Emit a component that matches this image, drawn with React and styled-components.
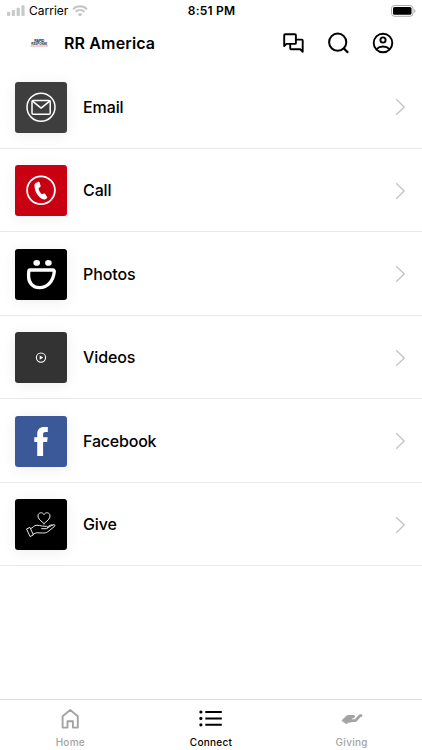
import React from "react";
import styled, { createGlobalStyle } from "styled-components";

const GlobalStyle = createGlobalStyle`
  * { box-sizing: border-box; }
  body { margin: 0; background: #fff; color: #000; font-family: Inter, "Liberation Sans", sans-serif; }
  svg { display: block; flex: none; }
`;

const Screen = styled.div`
  display: flex;
  flex-direction: column;
  height: 750px;
  width: 422px;
  overflow: hidden;
  background: #fff;
`;

const StatusBar = styled.div`
  display: grid;
  grid-template-columns: 1fr auto 1fr;
  align-items: center;
  height: 22px;
  flex: none;
  padding: 0 6px 0 7px;
`;

const StatusGroup = styled.div`
  display: flex;
  align-items: center;
  gap: 4px;
  justify-content: ${(p) => (p.$end ? "flex-end" : "flex-start")};
`;

const Carrier = styled.span`
  font-size: 12px;
  line-height: 22px;
  letter-spacing: 0;
`;

const Clock = styled.span`
  font-size: 12px;
  font-weight: 600;
  letter-spacing: 0.2px;
  line-height: 22px;
`;

const Header = styled.header`
  display: flex;
  align-items: center;
  height: 43px;
  flex: none;
  padding: 0 27px 2px 29px;
`;

const Title = styled.h1`
  margin: 0 auto 0 14px;
  font-size: 16px;
  font-weight: 600;
  line-height: 22px;
  letter-spacing: 0.14px;
`;

const Actions = styled.div`
  display: flex;
  gap: 21px;
`;

const List = styled.main`
  flex: 1;
`;

const Row = styled.div`
  display: flex;
  align-items: center;
  height: 83.5px;
  padding: 2px 16px 0 15px;
  border-bottom: 1px solid #e9e9eb;
`;

const Tile = styled.div`
  width: 52px;
  height: 51px;
  border-radius: 3px;
  background: ${(p) => p.$color};
  box-shadow: 0 2px 14px rgba(0, 0, 0, 0.07);
`;

const Label = styled.span`
  margin: 0 auto 1px 16px;
  font-size: 16px;
  font-weight: 500;
  line-height: 22px;
  letter-spacing: ${(p) => p.$spacing || "-0.1px"};
`;

const TabBar = styled.nav`
  display: grid;
  grid-template-columns: repeat(3, 1fr);
  height: 51px;
  flex: none;
  border-top: 1px solid #dcdcdc;
`;

const Tab = styled.div`
  display: flex;
  flex-direction: column;
  align-items: center;
  padding-top: 7px;
  color: ${(p) => (p.$active ? "#000" : "#a3a3a3")};
`;

const TabLabel = styled.span`
  font-size: 10px;
  font-weight: 500;
  line-height: 14px;
  margin-top: 4px;
  letter-spacing: 0.28px;
`;

const TileArt = ({ children }) => (
  <svg width="52" height="51" viewBox="-0.5 0 52 51" fill="none" stroke="#fff" strokeLinejoin="round" strokeLinecap="round">
    {children}
  </svg>
);

const items = [
  {
    label: "Email", color: "#3e3e3e",
    art: <><circle cx="25.5" cy="25.2" r="14" strokeWidth="1.5" /><rect x="16.5" y="18.4" width="18.2" height="13.8" rx="1.3" strokeWidth="1.5" /><path d="m17 19.2 8.6 6.9 8.6-6.9" strokeWidth="1.5" /></>,
  },
  {
    label: "Call", color: "#c90012",
    art: <><circle cx="25.5" cy="25.3" r="13.9" strokeWidth="1.8" /><path d="m20.3 18 2.6-1.2c.7-.3 1 .1 1.2.7l1 3.2c.2.7 0 1-.5 1.4l-1.5 1.2c.2 2.2 1.5 4.5 3.3 6l1.9-.7c.6-.2 1-.1 1.4.5l1.9 2.8c.3.5.3 1-.2 1.4l-1.6 1c-.9.5-2 .3-3-.2-4.8-2.6-7.8-8-7.8-13.8 0-1.1.4-1.8 1.3-2.3Z" fill="#fff" stroke="none" /></>,
  },
  {
    label: "Photos", color: "#000",
    art: <><ellipse cx="21.2" cy="13.9" rx="3.3" ry="2.8" fill="#fff" stroke="none" /><ellipse cx="32.9" cy="13.9" rx="3.3" ry="2.8" fill="#fff" stroke="none" /><path d="M14.4 21h23c1 0 1.5.7 1.4 1.6C37.9 31.8 32.2 38.6 24 38.6c-6.5 0-10.7-4.5-10.9-10.7-.1-2 0-3.5.2-5.5.1-.9.4-1.4 1.1-1.4Z" strokeWidth="3.3" /></>,
  },
  {
    label: "Videos", color: "#333",
    art: <><circle cx="25.5" cy="25.6" r="4.6" strokeWidth="1.1" /><path d="m24.2 23.4 3.5 2.2-3.5 2.2Z" fill="#fff" stroke="none" /></>,
  },
  {
    label: "Facebook", color: "#3b5998", spacing: "-0.2px",
    art: <path d="M21.7 40V26h-2.9v-4.8h2.9v-3.1c0-4.9 2.6-7.2 7.1-7.2 1.4 0 2.6.1 3.5.2V16h-2.2c-2.1 0-2.5 1-2.5 2.5v2.7h4.6l-.6 4.8h-4v14Z" fill="#fff" stroke="none" />,
  },
  {
    label: "Give", color: "#000",
    art: <g stroke="#e8e8e8" strokeWidth="1"><path d="M28.5 24.6c-2.8-2.5-6-4.6-6-7.6 0-3.7 4.5-4.4 6-1.3 1.5-3.1 6-2.4 6 1.3 0 3-3.2 5.1-6 7.6Z" /><path d="m11.4 29.8 3-1.4 3.5 7.5-3 1.5ZM15.2 29.6c2.5-.7 3.1-3.4 6.2-3.4 2.2 0 3.5.7 5.5.9l4 .2c1.8.1 1.8 2.3 0 2.4h-4.8M31.8 28.9l5.8-3.1c1.8-.7 2.5.7 1.1 1.9l-6.6 5.2c-1.5 1.1-3.2 1.2-5.2 1.1l-5.2-.2c-1.7 0-2.5.8-4.1 1.5M32.4 27.6l2.9-1.6c1-.4 1.7-.2 1.9.2" /></g>,
  },
];

export default function App() {
  return (
    <>
      <GlobalStyle />
      <Screen>
        <StatusBar>
          <StatusGroup>
            <svg width="18" height="12" viewBox="0 0 18 12" fill="#c9c9c9"><rect y="6.7" width="3.2" height="4.3" rx=".8" /><rect x="4.8" y="5" width="3.2" height="6" rx=".8" /><rect x="9.6" y="2.7" width="3.2" height="8.3" rx=".8" /><rect x="14.4" y=".3" width="3.2" height="10.7" rx=".8" /></svg>
            <Carrier>Carrier</Carrier>
            <svg width="16" height="12" viewBox="0 0 16 12" fill="none" stroke="#c5c5c5" strokeWidth="2"><path d="M1 4.2c4-3.9 10-3.9 14 0M3.5 6.9c2.6-2.5 6.4-2.5 9 0" /><path d="M5.6 9.2c1.4-1.3 3.4-1.3 4.8 0L8 11.5Z" fill="#c5c5c5" stroke="none" /></svg>
          </StatusGroup>
          <Clock>8:51 PM</Clock>
          <StatusGroup $end>
            <svg width="25" height="12" viewBox="0 0 25 12"><rect x=".5" y=".5" width="21.5" height="10.8" rx="3" fill="#fff" stroke="#aaa" /><rect x="2" y="2" width="18.5" height="7.8" rx="1.6" /><path d="M23.3 4v4c1.6-.7 1.6-3.3 0-4Z" fill="#aaa" /></svg>
          </StatusGroup>
        </StatusBar>
        <Header>
          <svg width="21" height="10" viewBox="0 0 21 10" fontFamily="Liberation Sans, sans-serif" fontWeight="700" textAnchor="middle">
            <text x="10.3" y="3.8" fontSize="3.6" fill="#222" textLength="10">RAPID</text>
            <text x="10.3" y="6.9" fontSize="3.5" fill="#222" textLength="16" lengthAdjust="spacingAndGlyphs">RESPONSE</text>
            <path d="M1.5 8h17.5" stroke="#df8c91" strokeWidth=".8" />
          </svg>
          <Title>RR America</Title>
          <Actions>
            <svg width="24" height="24" viewBox="0 0 24 24" fill="none" stroke="#000" strokeWidth="1.9" strokeLinejoin="round"><path d="M3.2 15.1V4.2c0-.7.3-1 1-1h9.7c.7 0 1 .3 1 1v7.7c0 .7-.3 1-1 1H5.4ZM14.9 8.6h5.8c.7 0 1 .3 1 1v11.1l-2.5-2.4h-9c-.7 0-1-.3-1-1v-4.4" /></svg>
            <svg width="24" height="24" viewBox="0 0 24 24" fill="none" stroke="#000" strokeWidth="2"><circle cx="11.7" cy="11.2" r="8.6" /><path d="m17.7 17.2 4.4 4.5" strokeWidth="2.3" /></svg>
            <svg width="24" height="24" viewBox="0 0 24 24" fill="none" stroke="#000" strokeWidth="1.9"><circle cx="12" cy="12" r="9.3" /><circle cx="12" cy="9" r="2.6" /><path d="M5.5 18.2c3.5-3.6 9.5-3.6 13 0" /></svg>
          </Actions>
        </Header>
        <List>
          {items.map((item) => (
            <Row key={item.label}>
              <Tile $color={item.color}><TileArt>{item.art}</TileArt></Tile>
              <Label $spacing={item.spacing}>{item.label}</Label>
              <svg width="11" height="18" viewBox="0 0 11 18" fill="none" stroke="#c2c2c4" strokeWidth="1.3"><path d="m1.2 1.2 8 7.8-8 7.8" /></svg>
            </Row>
          ))}
        </List>
        <TabBar>
          <Tab>
            <svg width="24" height="24" viewBox="0 0 24 24" fill="none" stroke="currentColor" strokeWidth="1.9" strokeLinejoin="round"><path d="M4.6 20.6V9.2L12.2 3l7.6 6.2v11.4h-4.9v-6.3H9.5v6.3Z" /></svg>
            <TabLabel>Home</TabLabel>
          </Tab>
          <Tab $active>
            <svg width="24" height="24" viewBox="0 0 24 24" fill="none" stroke="currentColor" strokeWidth="2"><path d="M6.3 5h16.5M6.3 11.4h16.5M6.3 17.8h16.5" /><g fill="currentColor" stroke="none"><circle cx="1.9" cy="5" r="1.6" /><circle cx="1.9" cy="11.4" r="1.6" /><circle cx="1.9" cy="17.8" r="1.6" /></g></svg>
            <TabLabel>Connect</TabLabel>
          </Tab>
          <Tab>
            <svg width="24" height="24" viewBox="0 0 24 24" fill="none" stroke="currentColor" strokeLinecap="round" strokeLinejoin="round"><path d="M2.1 13.4 6.4 9.2c.5-.5 1-.7 1.8-.7h5.6c1 0 1.2 1.6.2 1.9l-2.8 1 .2 3.6H9c-.7 0-1.1.3-1.5.8l-.6.7Z" fill="currentColor" strokeWidth="1" /><path d="M9.4 13.6h5.4c.6 0 1-.2 1.4-.7l3.8-4.3h1" strokeWidth="2.8" /></svg>
            <TabLabel>Giving</TabLabel>
          </Tab>
        </TabBar>
      </Screen>
    </>
  );
}
